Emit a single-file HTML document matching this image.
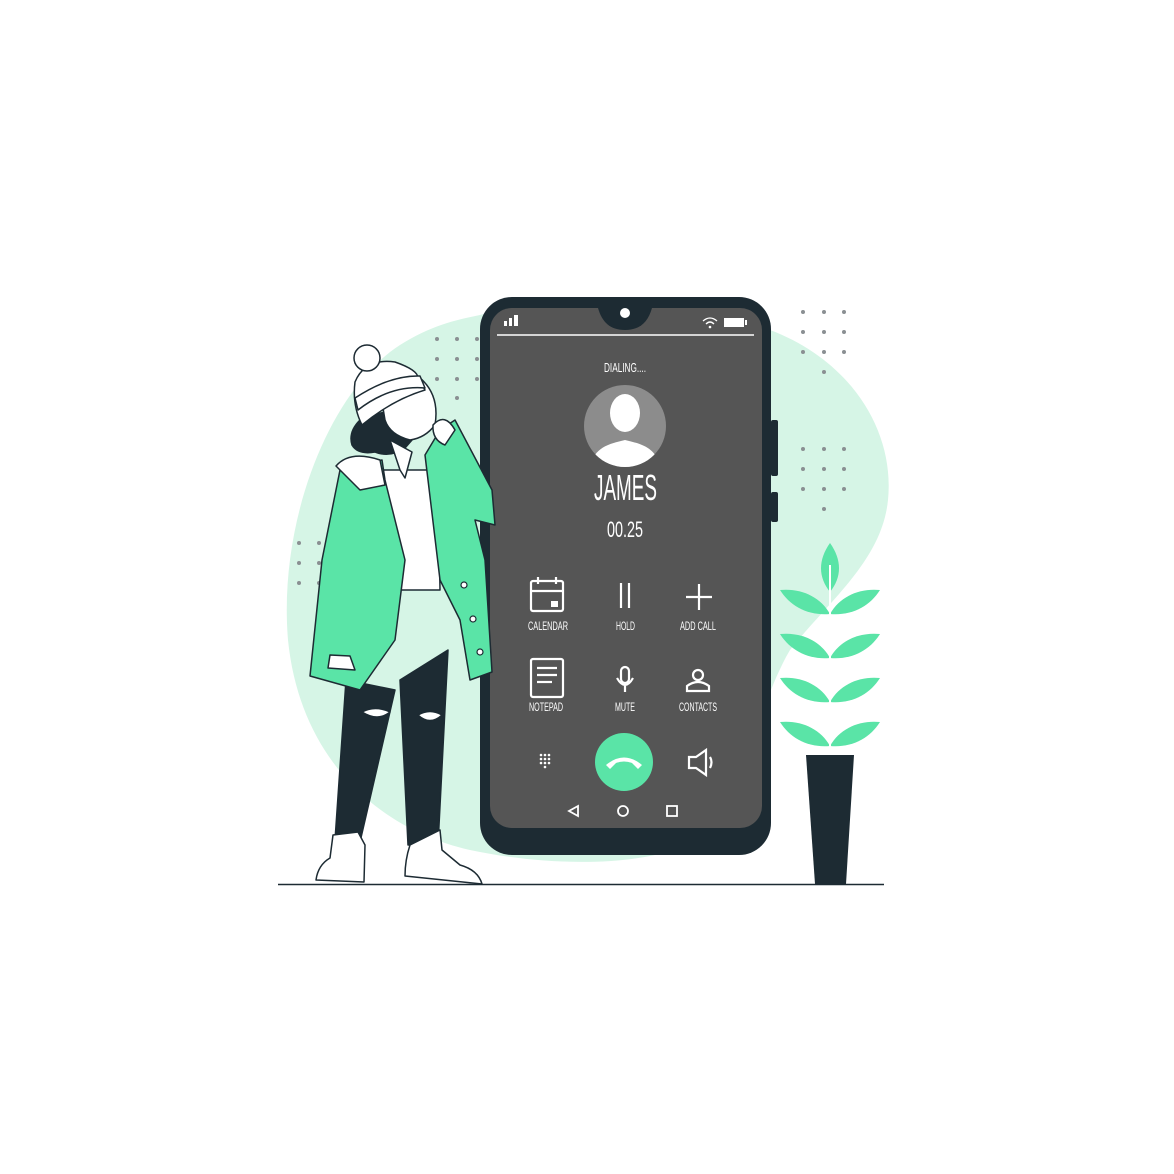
<!DOCTYPE html>
<html><head><meta charset="utf-8"><style>
html,body{margin:0;padding:0;background:#fff;}
svg{display:block}
text{font-family:"Liberation Sans",sans-serif;fill:#fff}
</style></head><body>
<svg width="1174" height="1174" viewBox="0 0 1174 1174" xmlns="http://www.w3.org/2000/svg">
<rect width="1174" height="1174" fill="#fff"/>
<path d="M480 315 C560 290 700 300 770 330 C850 360 895 430 888 500 C882 560 830 600 790 650 C760 700 740 800 700 840 C640 870 540 865 470 850 C380 830 300 760 288 640 C278 520 330 390 400 345 C430 326 455 320 480 315 Z" fill="#d6f5e6"/>
<g fill="#8a8f92">
<circle cx="437" cy="339" r="2"/><circle cx="457" cy="339" r="2"/><circle cx="477" cy="339" r="2"/>
<circle cx="437" cy="359" r="2"/><circle cx="457" cy="359" r="2"/><circle cx="477" cy="359" r="2"/>
<circle cx="437" cy="379" r="2"/><circle cx="457" cy="379" r="2"/><circle cx="477" cy="379" r="2"/>
<circle cx="457" cy="398" r="2"/>
<circle cx="803" cy="312" r="2"/><circle cx="824" cy="312" r="2"/><circle cx="844" cy="312" r="2"/>
<circle cx="803" cy="332" r="2"/><circle cx="824" cy="332" r="2"/><circle cx="844" cy="332" r="2"/>
<circle cx="803" cy="352" r="2"/><circle cx="824" cy="352" r="2"/><circle cx="844" cy="352" r="2"/>
<circle cx="824" cy="372" r="2"/>
<circle cx="803" cy="449" r="2"/><circle cx="824" cy="449" r="2"/><circle cx="844" cy="449" r="2"/>
<circle cx="803" cy="469" r="2"/><circle cx="824" cy="469" r="2"/><circle cx="844" cy="469" r="2"/>
<circle cx="803" cy="489" r="2"/><circle cx="824" cy="489" r="2"/><circle cx="844" cy="489" r="2"/>
<circle cx="824" cy="509" r="2"/>
<circle cx="299" cy="543" r="2"/><circle cx="319" cy="543" r="2"/>
<circle cx="299" cy="563" r="2"/><circle cx="319" cy="563" r="2"/>
<circle cx="299" cy="583" r="2"/><circle cx="319" cy="583" r="2"/>
</g>
<line x1="278" y1="884.5" x2="884" y2="884.5" stroke="#1d2b33" stroke-width="1.5"/>
<rect x="771" y="420" width="7" height="56" rx="2" fill="#1d2b33"/>
<rect x="771" y="492" width="7" height="30" rx="2" fill="#1d2b33"/>
<rect x="480" y="297" width="291" height="558" rx="32" fill="#1d2b33"/>
<rect x="490" y="308" width="272" height="520" rx="22" fill="#555555"/>
<path d="M598 308 H652 C648 322 640 330 625 330 C610 330 602 322 598 308Z" fill="#1d2b33"/>
<circle cx="625" cy="313" r="5" fill="#fff"/>
<line x1="497" y1="335" x2="754" y2="335" stroke="#fff" stroke-width="1.5"/>
<g fill="#fff"><rect x="504" y="321" width="3" height="5"/><rect x="509" y="318" width="3" height="8"/><rect x="514" y="315" width="4" height="11"/></g>
<rect x="724" y="318" width="20" height="9" fill="#fff"/><rect x="745" y="320" width="2" height="5" fill="#fff"/>
<g fill="none" stroke="#fff" stroke-width="1.3"><path d="M703 321 Q710 315 717 321"/><path d="M706 324 Q710 320 714 324"/></g><circle cx="710" cy="327" r="1.3" fill="#fff"/>
<text x="604" y="372" font-size="13" textLength="42" lengthAdjust="spacingAndGlyphs">DIALING....</text>
<circle cx="625" cy="426" r="41" fill="#8c8c8c"/>
<clipPath id="av"><circle cx="625" cy="426" r="41"/></clipPath>
<g clip-path="url(#av)" fill="#fff"><ellipse cx="625" cy="413" rx="15" ry="19"/><path d="M590 470 C592 448 608 444 625 440 C642 444 658 448 660 470Z"/></g>
<text x="594" y="500" font-size="36" textLength="63" lengthAdjust="spacingAndGlyphs">JAMES</text>
<text x="607" y="537" font-size="22" textLength="36" lengthAdjust="spacingAndGlyphs">00.25</text>
<g fill="none" stroke="#fff" stroke-width="2.2">
<rect x="531" y="581" width="32" height="30" rx="2"/><line x1="531" y1="591" x2="563" y2="591"/><line x1="538" y1="577" x2="538" y2="584"/><line x1="556" y1="577" x2="556" y2="584"/>
<line x1="621" y1="583" x2="621" y2="608"/><line x1="629" y1="583" x2="629" y2="608"/>
<line x1="686" y1="597" x2="712" y2="597"/><line x1="699" y1="584" x2="699" y2="610"/>
<rect x="531" y="659" width="32" height="38" rx="2"/><line x1="537" y1="668" x2="557" y2="668"/><line x1="537" y1="675" x2="557" y2="675"/><line x1="537" y1="682" x2="552" y2="682"/>
<rect x="621" y="667" width="8" height="16" rx="4"/><path d="M617 678 Q625 692 633 678"/><line x1="625" y1="686" x2="625" y2="692"/>
<circle cx="698" cy="675" r="5"/><path d="M687 691 V686 Q698 678 709 686 V691Z"/>
<path d="M689 757 H696 L706 750 V775 L696 768 H689Z"/><path d="M710 757 Q713 762 710 768"/>
</g>
<rect x="551" y="601" width="7" height="6" fill="#fff"/>
<g font-size="12">
<text x="528" y="630" textLength="40" lengthAdjust="spacingAndGlyphs">CALENDAR</text>
<text x="616" y="630" textLength="19" lengthAdjust="spacingAndGlyphs">HOLD</text>
<text x="680" y="630" textLength="36" lengthAdjust="spacingAndGlyphs">ADD CALL</text>
<text x="529" y="711" textLength="34" lengthAdjust="spacingAndGlyphs">NOTEPAD</text>
<text x="615" y="711" textLength="20" lengthAdjust="spacingAndGlyphs">MUTE</text>
<text x="679" y="711" textLength="38" lengthAdjust="spacingAndGlyphs">CONTACTS</text>
</g>
<g fill="#fff"><circle cx="541" cy="755" r="1.3"/><circle cx="545" cy="755" r="1.3"/><circle cx="549" cy="755" r="1.3"/><circle cx="541" cy="759" r="1.3"/><circle cx="545" cy="759" r="1.3"/><circle cx="549" cy="759" r="1.3"/><circle cx="541" cy="763" r="1.3"/><circle cx="545" cy="763" r="1.3"/><circle cx="549" cy="763" r="1.3"/><circle cx="545" cy="767" r="1.3"/></g>
<circle cx="624" cy="762" r="29" fill="#5ae4a7"/>
<path d="M606 765 Q624 750 642 765 L638 769 L632 763 Q624 760 616 763 L610 769Z" fill="#fff"/>
<g fill="none" stroke="#fff" stroke-width="1.8"><path d="M578 806 L569 811 L578 816Z"/><circle cx="623" cy="811" r="5"/><rect x="667" y="806" width="10" height="10"/></g>
<!-- plant -->
<g fill="#5ae4a7">
<path d="M830 592 C818 577 818 560 830 543 C842 560 842 577 830 592Z"/>
<path d="M830 614 C820 596 800 588 780 590 C790 606 808 616 830 614Z"/><path d="M830 614 C840 596 860 588 880 590 C870 606 852 616 830 614Z"/>
<path d="M830 658 C820 640 800 632 780 634 C790 650 808 660 830 658Z"/><path d="M830 658 C840 640 860 632 880 634 C870 650 852 660 830 658Z"/>
<path d="M830 702 C820 684 800 676 780 678 C790 694 808 704 830 702Z"/><path d="M830 702 C840 684 860 676 880 678 C870 694 852 704 830 702Z"/>
<path d="M830 746 C820 728 800 720 780 722 C790 738 808 748 830 746Z"/><path d="M830 746 C840 728 860 720 880 722 C870 738 852 748 830 746Z"/>
</g>
<line x1="830" y1="565" x2="830" y2="756" stroke="#fff" stroke-width="2"/>
<path d="M806 755 H854 L846 884 H815Z" fill="#1d2b33"/>
<!-- person -->
<g stroke="#1d2b33" stroke-width="1.5" stroke-linejoin="round">
<path d="M346 680 L335 840 L360 842 L395 690Z M400 680 L408 845 L438 845 L448 650 Z" fill="#1d2b33"/>
<path d="M362 712 Q375 705 390 712 Q378 722 362 712Z M418 715 Q430 708 442 715 Q430 726 418 715Z" fill="#fff"/>
<path d="M333 835 L330 858 Q318 865 316 880 L364 882 L365 845 L358 832Z" fill="#fff"/>
<path d="M410 845 Q405 860 405 876 L482 884 Q478 870 460 865 L442 850 L440 830 Z" fill="#fff"/>
<path d="M378 470 L370 590 L440 590 L438 470 Z" fill="#fff"/>
<path d="M382 460 L340 470 L322 560 L310 676 L360 690 L395 640 L405 560 L385 480 Z" fill="#5ae4a7"/>
<path d="M425 455 L440 580 L460 620 L470 680 L492 672 L485 560 L475 520 L495 525 L492 490 L455 420 L440 430 Z" fill="#5ae4a7"/>
<path d="M336 466 Q350 450 380 460 L385 485 L360 490 Z" fill="#fff"/>
<path d="M330 655 L328 668 L355 670 L350 656Z" fill="#fff"/>
<path d="M360 420 Q348 432 352 445 Q358 455 375 452 Q390 458 405 448 L412 440 Q410 420 390 410 Z" fill="#1d2b33"/>
<path d="M380 390 Q395 370 420 378 Q440 395 435 425 Q425 438 410 440 Q390 435 385 420Z" fill="#fff"/>
<path d="M355 382 Q365 358 395 362 Q418 370 418 378 L425 390 Q392 400 362 425 Q352 405 355 382Z" fill="#fff"/>
<path d="M358 410 Q390 385 425 388 L420 376 Q390 375 355 398Z" fill="#fff"/>
<circle cx="367" cy="358" r="13" fill="#fff"/>
<path d="M433 425 Q445 412 455 430 L445 445 Q432 440 433 425Z" fill="#fff"/>
<path d="M390 440 L400 470 L405 478 L412 452 Z" fill="#fff"/>
</g>
<g fill="#fff" stroke="#1d2b33" stroke-width="1.2"><circle cx="464" cy="585" r="3"/><circle cx="473" cy="619" r="3"/><circle cx="480" cy="652" r="3"/></g>
</svg>
</body></html>
